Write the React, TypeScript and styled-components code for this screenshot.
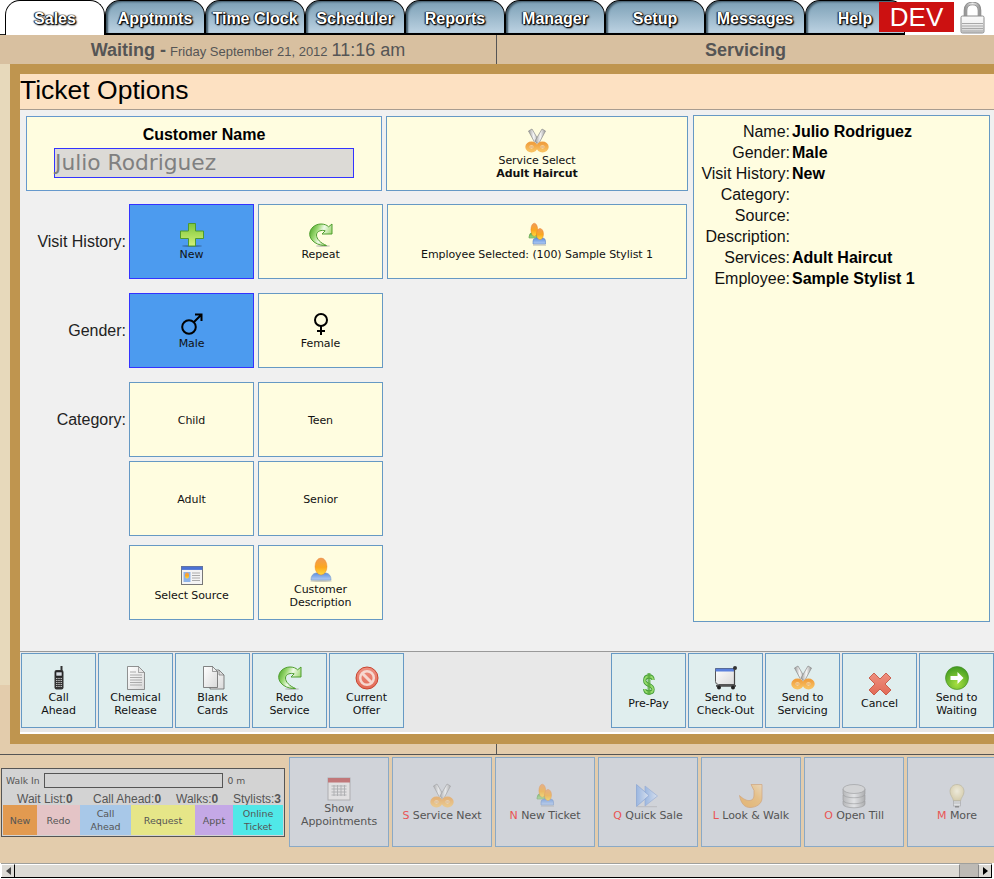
import React from "react";
import styled, { createGlobalStyle } from "styled-components";

const Global = createGlobalStyle`
  html, body { margin: 0; padding: 0; background: #fff; overflow: hidden; }
  * { box-sizing: border-box; }
`;

const SANS = `"Liberation Sans", Arial, sans-serif`;
const DEJA = `"DejaVu Sans", Verdana, sans-serif`;

const Page = styled.div`
  width: 994px;
  height: 879px;
  display: flex;
  flex-direction: column;
  overflow: hidden;
  font-family: ${DEJA};
  background: #fff;
`;

const TabBar = styled.div`
  height: 35px;
  flex: none;
  display: flex;
  align-items: flex-start;
  padding-left: 5px;
  background: linear-gradient(#fff 34px, #222 34px, #222 35px, #fff 35px);
  background-size: 5px 35px;
  background-repeat: no-repeat;
`;

const Tab = styled.div<{ $active?: boolean }>`
  width: 100px;
  height: 35px;
  flex: none;
  display: flex;
  justify-content: center;
  padding-top: 9px;
  border: solid #000;
  border-width: ${(p) => (p.$active ? "1px 1px 0 1px" : "1px 1px 2px 1px")};
  border-radius: 15px 15px 0 0;
  background: ${(p) => (p.$active ? "#fff" : "linear-gradient(#7b9fb5, #bcd2e2)")};
  box-shadow: ${(p) => (p.$active ? "none" : "inset 2px 1px 2px #3e5563")};
  font: bold 16px ${SANS};
  line-height: 18px;
  color: #fff;
  text-shadow: 0 0 1px #000, 0 0 1px #000, 1px 1px 2px #000, 1px 1px 1px #222, -1px 0 1px #333;
`;

const DevBadge = styled.div`
  width: 75px;
  height: 30px;
  margin: 2px 0 0 -26px;
  position: relative;
  flex: none;
  display: flex;
  align-items: center;
  justify-content: center;
  background: #cc1111;
  color: #fff;
  font: 26px ${SANS};
`;

const LockWrap = styled.div`
  width: 25px;
  height: 32px;
  margin: 2px 0 0 6px;
  flex: none;
`;

const StatusBar = styled.div`
  height: 29px;
  flex: none;
  display: grid;
  grid-template-columns: 497px 497px;
  background: #d8c0a0;
  color: #555;
  font-family: ${SANS};
`;

const StatusCell = styled.div<{ $divider?: boolean }>`
  display: flex;
  align-items: baseline;
  justify-content: center;
  gap: 4px;
  padding-top: 4px;
  font-size: 18px;
  line-height: 22px;
  border-right: ${(p) => (p.$divider ? "1px solid #555" : "none")};
`;

const StatusStrong = styled.b`
  font-size: 18px;
`;

const StatusSmall = styled.span`
  font-size: 13px;
`;

const MainRow = styled.div`
  height: 680px;
  flex: none;
  display: flex;
`;

const SideStrip = styled.div`
  width: 10px;
  flex: none;
  background: linear-gradient(#e7d9bb 0, #e7d9bb 621px, #e3ccac 621px);
`;

const Frame = styled.div`
  flex: 1;
  min-width: 0;
  display: flex;
  flex-direction: column;
  border: solid #bf954f;
  border-width: 10px 0 10px 10px;
  background: #fff;
`;

const TitleBar = styled.div`
  height: 36px;
  flex: none;
  background: #fde1c2;
  border-bottom: 1px solid #a89c90;
  font: 26.5px ${SANS};
  line-height: 33px;
  color: #000;
`;

const Body = styled.div`
  height: 541px;
  flex: none;
  display: flex;
  background: #f0f0f0;
`;

const LeftColumn = styled.div`
  width: 673px;
  flex: none;
  padding: 6px 0 0 6px;
  display: flex;
  flex-direction: column;
`;

const TopRow = styled.div`
  display: flex;
  gap: 4px;
`;

const NameBox = styled.div`
  width: 356px;
  height: 75px;
  border: 1px solid #6699cc;
  background: #fffde0;
  display: flex;
  flex-direction: column;
  align-items: center;
  padding-top: 9px;
`;

const NameLabel = styled.div`
  font: bold 16px ${SANS};
  line-height: 18px;
  color: #000;
  margin-bottom: 4px;
`;

const NameField = styled.div`
  width: 300px;
  height: 30px;
  border: 1px solid #3333ff;
  background: #dcdad6;
  color: #808080;
  font: 21.75px ${DEJA};
  line-height: 28px;
  white-space: nowrap;
`;

const Row = styled.div<{ $top: number }>`
  display: flex;
  margin-top: ${(p) => p.$top}px;
`;

const RowLabel = styled.div`
  width: 103px;
  height: 75px;
  flex: none;
  padding-right: 3px;
  display: flex;
  align-items: center;
  justify-content: flex-end;
  font: 16px ${SANS};
  color: #222;
`;

const ButtonGrid = styled.div`
  display: flex;
  gap: 4px;
`;

const ActionButton = styled.div<{
  $w?: number;
  $h?: number;
  $variant?: "plain" | "selected" | "tool" | "dock";
}>`
  width: ${(p) => p.$w ?? 125}px;
  height: ${(p) => p.$h ?? 75}px;
  flex: none;
  display: flex;
  flex-direction: column;
  align-items: center;
  justify-content: center;
  text-align: center;
  padding-top: 1px;
  font: 11px ${DEJA};
  line-height: 13px;
  letter-spacing: -0.08px;
  border: 1px solid
    ${(p) =>
      p.$variant === "selected" ? "#3333ff" : p.$variant === "dock" ? "#8aa9c6" : "#6699c4"};
  background: ${(p) =>
    p.$variant === "selected"
      ? "#4c9bef"
      : p.$variant === "tool"
        ? "#e0eeee"
        : p.$variant === "dock"
          ? "#d0d3d9"
          : "#fffde0"};
  color: ${(p) => (p.$variant === "dock" ? "#555" : "#111")};
`;

const IconSlot = styled.div<{ $faded?: boolean }>`
  width: 24px;
  height: 24px;
  flex: none;
  margin-bottom: 1px;
  opacity: ${(p) => (p.$faded ? 0.62 : 1)};
  svg { display: block; overflow: visible; }
`;

const Hotkey = styled.span`
  color: #e95555;
`;

const RightPanel = styled.div`
  width: 297px;
  height: 507px;
  margin-top: 5px;
  flex: none;
  border: 1px solid #6699c4;
  background: #fffde0;
  padding-top: 5px;
  display: grid;
  grid-template-columns: 96px 1fr;
  column-gap: 2px;
  grid-auto-rows: 21px;
  font: 16px ${SANS};
  line-height: 21px;
  color: #111;
`;

const DetailLabel = styled.div`
  text-align: right;
`;

const DetailValue = styled.div`
  font-weight: bold;
  color: #000;
`;

const Toolbar = styled.div`
  height: 81px;
  flex: none;
  padding: 1px 0 0 1px;
  border-top: 1px solid #999;
  background: #e8e8e8;
  display: flex;
  justify-content: space-between;
`;

const ToolGroup = styled.div`
  display: flex;
  gap: 2px;
`;

const WhiteLine = styled.div`
  height: 2px;
  flex: none;
  background: #fff;
`;

const Seam = styled.div`
  height: 11px;
  flex: none;
  background: #e3ccac;
  border-bottom: 1px solid #555;
  display: flex;
  justify-content: flex-start;
`;

const SeamLine = styled.div`
  width: 497px;
  border-right: 1px solid #555;
`;

const Dock = styled.div`
  height: 108px;
  flex: none;
  background: #e3ccac;
  display: flex;
  align-items: flex-start;
  padding: 2px 0 0 1px;
  gap: 3px;
  overflow: hidden;
`;

const Widget = styled.div`
  width: 284px;
  height: 69px;
  margin: 11px 1px 0 0;
  flex: none;
  border: 1px solid #555;
  background: #d3d3d3;
  display: flex;
  flex-direction: column;
  padding: 1px;
  color: #555;
`;

const WalkRow = styled.div`
  height: 21px;
  display: flex;
  align-items: center;
  padding-left: 3px;
  font: 9.2px ${DEJA};
  white-space: nowrap;
`;

const WalkBar = styled.div`
  width: 179px;
  height: 15px;
  margin: 0 4px 0 5px;
  border: 1px solid #555;
  background: #d3d3d3;
  flex: none;
`;

const StatsRow = styled.div`
  height: 14px;
  display: grid;
  grid-template-columns: 76px 83px 57px 1fr;
  padding: 0 0 0 14px;
  font: 12px ${SANS};
  line-height: 16px;
  white-space: nowrap;
`;

const LegendRow = styled.div`
  height: 30px;
  display: flex;
`;

const LegendCell = styled.div<{ $bg: string; $w: number }>`
  width: ${(p) => p.$w}px;
  flex: none;
  background: ${(p) => p.$bg};
  display: flex;
  align-items: center;
  justify-content: center;
  text-align: center;
  font: 9.5px ${DEJA};
  line-height: 13px;
  color: #555;
`;

const ScrollBar = styled.div`
  height: 15px;
  flex: none;
  margin: 0 2px 1px 1px;
  display: flex;
  background: #bdbab5;
  border-top: 1px solid #a0a09c;
  border-bottom: 1px solid #000;
`;

const ScrollButton = styled.div<{ $end?: boolean }>`
  width: 14px;
  flex: none;
  background: #dcdad5;
  border-top: 1px solid #fff;
  border-right: 1px solid #000;
  border-left: 1px solid ${(p) => (p.$end ? "#888" : "#fff")};
  display: flex;
  align-items: center;
  justify-content: center;
`;

const ScrollThumb = styled.div`
  width: 945px;
  flex: none;
  background: #dcdad5;
  border-top: 1px solid #fff;
  border-right: 1px solid #888;
`;

const ScrollTrack = styled.div`
  flex: 1;
`;

const TriangleLeft = styled.div`
  border: 4px solid transparent;
  border-right: 5px solid #444;
  border-left: 0;
`;

const TriangleRight = styled.div`
  border: 4px solid transparent;
  border-left: 5px solid #000;
  border-right: 0;
`;

/* ---------- icons ---------- */

const HiddenDefs = styled.svg`
  position: absolute;
  width: 0;
  height: 0;
`;

const Defs = () => (
  <HiddenDefs aria-hidden="true">
    <defs>
      <linearGradient id="gGreen" x1="0" y1="0" x2="0" y2="1">
        <stop offset="0" stopColor="#7cc63e" />
        <stop offset="0.5" stopColor="#a8dc58" />
        <stop offset="1" stopColor="#d2f07a" />
      </linearGradient>
      <linearGradient id="gGreenArc" x1="0" y1="0.2" x2="1" y2="0.6">
        <stop offset="0" stopColor="#4fa82a" />
        <stop offset="0.3" stopColor="#9ad872" />
        <stop offset="0.55" stopColor="#f0fae8" />
        <stop offset="1" stopColor="#8fd05c" />
      </linearGradient>
      <linearGradient id="gSteel" x1="0" y1="0" x2="1" y2="0">
        <stop offset="0" stopColor="#9a9a9a" />
        <stop offset="0.5" stopColor="#f6f6f6" />
        <stop offset="1" stopColor="#9a9a9a" />
      </linearGradient>
      <linearGradient id="gOrange" x1="0" y1="0" x2="0" y2="1">
        <stop offset="0" stopColor="#f0a040" />
        <stop offset="1" stopColor="#f8c060" />
      </linearGradient>
      <linearGradient id="gHead" x1="0" y1="0" x2="0" y2="1">
        <stop offset="0" stopColor="#f09a58" />
        <stop offset="0.55" stopColor="#fca81e" />
        <stop offset="1" stopColor="#ffdc40" />
      </linearGradient>
      <linearGradient id="gBlue" x1="0" y1="0" x2="0" y2="1">
        <stop offset="0" stopColor="#5b8fe0" />
        <stop offset="1" stopColor="#b4cdf4" />
      </linearGradient>
      <linearGradient id="gGreenBody" x1="0" y1="0" x2="0" y2="1">
        <stop offset="0" stopColor="#4aa838" />
        <stop offset="1" stopColor="#a6dc86" />
      </linearGradient>
      <linearGradient id="gPaper" x1="0" y1="0" x2="1" y2="1">
        <stop offset="0" stopColor="#ffffff" />
        <stop offset="1" stopColor="#d9d9d9" />
      </linearGradient>
      <linearGradient id="gRed" x1="0" y1="0" x2="0" y2="1">
        <stop offset="0" stopColor="#ee9080" />
        <stop offset="1" stopColor="#e26a56" />
      </linearGradient>
      <radialGradient id="gBall" cx="0.5" cy="0.75" r="0.75">
        <stop offset="0" stopColor="#a8e040" />
        <stop offset="1" stopColor="#3f9a20" />
      </radialGradient>
      <linearGradient id="gArrow" x1="0" y1="1" x2="1" y2="0">
        <stop offset="0" stopColor="#eda238" />
        <stop offset="0.6" stopColor="#f2b458" />
        <stop offset="1" stopColor="#f8d8a8" />
      </linearGradient>
      <linearGradient id="gCyl" x1="0" y1="0" x2="1" y2="0">
        <stop offset="0" stopColor="#a8a8a8" />
        <stop offset="0.5" stopColor="#ececec" />
        <stop offset="1" stopColor="#989898" />
      </linearGradient>
      <linearGradient id="gFF" x1="0" y1="0" x2="1" y2="0">
        <stop offset="0" stopColor="#7ba6e6" />
        <stop offset="1" stopColor="#dce8fa" />
      </linearGradient>
      <radialGradient id="gBulb" cx="0.5" cy="0.4" r="0.6">
        <stop offset="0" stopColor="#fff8dc" />
        <stop offset="1" stopColor="#d8c890" />
      </radialGradient>
      <linearGradient id="gLock" x1="0" y1="0" x2="0" y2="1">
        <stop offset="0" stopColor="#fafafa" />
        <stop offset="0.4" stopColor="#f2f2f2" />
        <stop offset="1" stopColor="#cfcfcf" />
      </linearGradient>
      <linearGradient id="gShackle" x1="0" y1="0" x2="1" y2="0">
        <stop offset="0" stopColor="#999" />
        <stop offset="0.5" stopColor="#eee" />
        <stop offset="1" stopColor="#999" />
      </linearGradient>
    </defs>
  </HiddenDefs>
);

const Svg = ({ children }: { children: React.ReactNode }) => (
  <svg width="24" height="24" viewBox="0 0 24 24">
    {children}
  </svg>
);

const PlusIcon = () => (
  <Svg>
    <ellipse cx="12" cy="23" rx="10" ry="1" fill="#2a4a70" opacity="0.5" />
    <path
      d="M8.500 0.500h7v7.500h8v7.500h-8v7.500h-7v-7.500h-8v-7.500h8z"
      fill="url(#gGreen)"
      stroke="#4d9a2e"
    />
  </Svg>
);

const RedoIcon = () => (
  <Svg>
    <ellipse cx="14" cy="23" rx="7" ry="1" fill="#999" opacity="0.5" />
    <path
      d="M23 1v10H13l3.200-3.200C13 6.600 7.500 8 7.500 12c0 4 4 8 10 10.500C9 23 1 18 0.700 11.500 0.500 5.500 6 1 12 1c3 0 6 1 7.600 2.800z"
      fill="url(#gGreenArc)"
      stroke="#4f9e2f"
    />
  </Svg>
);

const MaleIcon = () => (
  <Svg>
    <circle cx="9" cy="15" r="6.800" fill="none" stroke="#000" strokeWidth="2" />
    <path d="M14 10 L21 3 M15 2.500h6.500v6.500" fill="none" stroke="#000" strokeWidth="2" />
  </Svg>
);

const FemaleIcon = () => (
  <Svg>
    <circle cx="12" cy="8" r="6" fill="none" stroke="#000" strokeWidth="2" />
    <path d="M12 14v9 M8 19h8" fill="none" stroke="#000" strokeWidth="2" />
  </Svg>
);

const ScissorsIcon = () => (
  <Svg>
    <path d="M3.500 2 L7 0 L14 12 L10.500 15 Z" fill="url(#gSteel)" stroke="#8a8a8a" strokeWidth="0.7" />
    <path d="M20.500 2 L17 0 L10 12 L13.500 15 Z" fill="url(#gSteel)" stroke="#8a8a8a" strokeWidth="0.7" />
    <ellipse cx="6.500" cy="18" rx="4.200" ry="3.400" fill="#fff3d8" stroke="url(#gOrange)" strokeWidth="4" />
    <ellipse cx="17.500" cy="18" rx="4.200" ry="3.400" fill="#fff3d8" stroke="url(#gOrange)" strokeWidth="4" />
    <path d="M4.500 18h4M15.500 18h4" stroke="#d88a30" strokeWidth="1.200" />
  </Svg>
);

const PeopleIcon = () => (
  <Svg>
    <path d="M4 14q0-4 4-5h4v6H4z" fill="url(#gGreenBody)" stroke="#5a9c4a" strokeWidth="0.6" />
    <ellipse cx="9.300" cy="6.700" rx="3.400" ry="6.500" fill="url(#gHead)" stroke="#e87820" strokeWidth="0.4" />
    <path d="M8 21v-3q0-2.500 3-3h7q2.500 0.500 2.500 3v3z" fill="url(#gBlue)" stroke="#5f86c4" strokeWidth="0.6" />
    <ellipse cx="15" cy="11" rx="3.500" ry="5.600" fill="url(#gHead)" stroke="#e87820" strokeWidth="0.4" />
    <rect x="8" y="21.500" width="13" height="1.200" fill="#999" opacity="0.5" />
  </Svg>
);

const PersonIcon = () => (
  <Svg>
    <ellipse cx="12" cy="23" rx="11" ry="1" fill="#999" opacity="0.5" />
    <path d="M2 22q0-6 5-7h10q5 1 5 7z" fill="url(#gBlue)" stroke="#6b93cc" strokeWidth="0.6" />
    <ellipse cx="12" cy="8.500" rx="6" ry="8.500" fill="url(#gHead)" stroke="#e87820" strokeWidth="0.4" />
  </Svg>
);

const CardIcon = () => (
  <Svg>
    <rect x="1.500" y="2.500" width="21" height="18" fill="#f4f4f4" stroke="#777" />
    <rect x="1.500" y="2.500" width="21" height="3.400" fill="#4c72d4" />
    <rect x="3.500" y="8" width="7" height="10" fill="#8fb3e8" />
    <ellipse cx="7" cy="11.500" rx="2" ry="3" fill="url(#gHead)" />
    <path d="M12 9h8M12 11.500h8M12 14h8M12 16.500h8" stroke="#aaa" strokeWidth="1.100" />
  </Svg>
);

const PhoneIcon = () => (
  <Svg>
    <rect x="13.500" y="0" width="2" height="5" fill="#333" />
    <rect x="7.500" y="4" width="9" height="19.500" rx="2" fill="#333" />
    <rect x="9" y="6" width="6" height="4" fill="#d5dae0" stroke="#000" strokeWidth="0.5" />
    <path
      d="M9.200 12.500h5.600M9.200 14.500h5.600M9.200 16.500h5.600M9.200 18.500h5.600M9.200 20.500h5.600"
      stroke="#ddd"
      strokeWidth="1"
      strokeDasharray="1.200 1"
    />
  </Svg>
);

const DocIcon = () => (
  <Svg>
    <path d="M3.500 0.500h11l6 6v17h-17z" fill="url(#gPaper)" stroke="#777" strokeWidth="0.8" />
    <path d="M14.500 0.500v6h6z" fill="#e6e6e6" stroke="#777" strokeWidth="0.6" />
    <path d="M6 6h6M6 9h12M6 11.500h12M6 14h12M6 16.500h12M6 19h12" stroke="#aaa" strokeWidth="1" />
  </Svg>
);

const DocsIcon = () => (
  <Svg>
    <path d="M9 4h9l5 5v14H9z" fill="url(#gPaper)" stroke="#666" strokeWidth="0.8" />
    <path d="M18 4v5h5z" fill="#ddd" stroke="#666" strokeWidth="0.6" />
    <path d="M2.500 0.500h9l5 5v16h-14z" fill="url(#gPaper)" stroke="#666" strokeWidth="0.8" />
    <path d="M11.500 0.500v5h5z" fill="#eee" stroke="#666" strokeWidth="0.6" />
  </Svg>
);

const NoIcon = () => (
  <Svg>
    <circle cx="12" cy="12" r="11" fill="url(#gRed)" stroke="#c8452f" />
    <circle cx="12" cy="12" r="6.800" fill="none" stroke="#f6d8d0" strokeWidth="2.500" />
    <path d="M7 7 L17 17" stroke="#f6d8d0" strokeWidth="3" />
  </Svg>
);

const DollarIcon = () => (
  <Svg>
    <g transform="translate(3.500,0) scale(0.7,1)">
      <path
        d="M18 8C18 5 15 4.500 12 4.500S6 5.500 6 8.500c0 5.500 12 3.500 12 9 0 2.500-3 3-6 3s-6-1-6-3.500"
        fill="none"
        stroke="#3a9630"
        strokeWidth="4.400"
      />
      <path
        d="M18 8C18 5 15 4.500 12 4.500S6 5.500 6 8.500c0 5.500 12 3.500 12 9 0 2.500-3 3-6 3s-6-1-6-3.500"
        fill="none"
        stroke="#96da6c"
        strokeWidth="2.400"
      />
    </g>
    <path d="M10.500 1h3v22h-3z" fill="#58aa3c" opacity="0.8" />
  </Svg>
);

const CartIcon = () => (
  <Svg>
    <path d="M1.500 2.500h19v16h-16q-3 0-3-3z" fill="url(#gPaper)" stroke="#555" />
    <rect x="1.500" y="2.500" width="19" height="3" fill="#5a80dc" />
    <circle cx="21" cy="2" r="2" fill="#333" />
    <path d="M20.500 3v16" stroke="#444" strokeWidth="1.200" />
    <rect x="2" y="19" width="20" height="1.800" fill="#555" />
    <circle cx="5" cy="21.500" r="2" fill="#222" />
    <circle cx="19" cy="21.500" r="2" fill="#222" />
  </Svg>
);

const CancelIcon = () => (
  <Svg>
    <path
      d="M6 1 L12 7 L18 1 L23 6 L17 12 L23 18 L18 23 L12 17 L6 23 L1 18 L7 12 L1 6 Z"
      fill="url(#gRed)"
      stroke="#c14a36"
      strokeWidth="0.8"
    />
  </Svg>
);

const ForwardBallIcon = () => (
  <Svg>
    <circle cx="12" cy="12" r="11.500" fill="url(#gBall)" stroke="#3f8a22" strokeWidth="0.6" />
    <path d="M5.500 10h7V6l6 6-6 6v-4h-7z" fill="#fff" />
  </Svg>
);

const CalendarIcon = () => (
  <Svg>
    <rect x="1" y="1" width="22" height="22" fill="#ece8e6" stroke="#999" />
    <rect x="1" y="1" width="22" height="4.500" fill="#b84040" />
    <path
      d="M4.500 9h15M4.500 12h15M4.500 15h15M4.500 18h15M7 8v11M10.500 8v11M14 8v11M17.500 8v11"
      stroke="#999"
      strokeWidth="0.9"
    />
  </Svg>
);

const FastForwardIcon = () => (
  <Svg>
    <rect x="1" y="22" width="20" height="1.200" fill="#999" opacity="0.5" />
    <path d="M9 2 L21.500 12 L9 22z" fill="url(#gFF)" stroke="#7a9ad4" strokeWidth="0.7" />
    <path d="M0.500 0.500 L13 11.500 L0.500 22.500z" fill="url(#gFF)" stroke="#5f88d0" strokeWidth="0.7" />
  </Svg>
);

const LookWalkIcon = () => (
  <Svg>
    <path
      d="M12 0.500H23V14C23 20 17 23.500 11 23.500 6 23.500 2 20 0.500 11.500 4 15 8 17 11 16.500 14 16 15 14 15 11V6.500z"
      fill="url(#gArrow)"
      stroke="#d08a48"
      strokeWidth="0.7"
    />
  </Svg>
);

const DatabaseIcon = () => (
  <Svg>
    <path d="M1 17v3c0 5 22 5 22 0v-3z" fill="url(#gCyl)" stroke="#777" strokeWidth="0.6" />
    <path d="M1 11v5c0 5 22 5 22 0v-5z" fill="url(#gCyl)" stroke="#777" strokeWidth="0.6" />
    <path d="M1 5v5c0 5 22 5 22 0V5z" fill="url(#gCyl)" stroke="#777" strokeWidth="0.6" />
    <ellipse cx="12" cy="5" rx="11" ry="4.500" fill="#d4d4d4" stroke="#777" strokeWidth="0.6" />
  </Svg>
);

const BulbIcon = () => (
  <Svg>
    <path
      d="M12 0.500C7.500 0.500 5 4 5 7.500c0 4 3 6 3.500 9.500h7C16 13.500 19 11.500 19 7.500 19 4 16.500 0.500 12 0.500z"
      fill="url(#gBulb)"
      stroke="#b0a680"
      strokeWidth="0.7"
    />
    <rect x="8.500" y="17" width="7" height="5" fill="#e8e8e8" stroke="#888" strokeWidth="0.6" />
    <path d="M8.500 19h7" stroke="#888" strokeWidth="0.6" />
    <rect x="10" y="22" width="4" height="1.500" fill="#666" />
  </Svg>
);

const LockIcon = () => (
  <svg width="25" height="32" viewBox="0 0 25 32">
    <path
      d="M5.500 15V8.500C5.500 4 8 1.500 12.500 1.500S19.500 4 19.500 8.500V15"
      fill="none"
      stroke="#8c8c8c"
      strokeWidth="3.600"
    />
    <path
      d="M5.500 15V8.500C5.500 4 8 1.500 12.500 1.500S19.500 4 19.500 8.500V15"
      fill="none"
      stroke="url(#gShackle)"
      strokeWidth="2.200"
    />
    <rect x="1" y="14" width="23" height="17" rx="1.500" fill="url(#gLock)" stroke="#8c8c8c" />
    <path d="M2 21.500h21M2 24h21M2 26.500h21M2 29h21" stroke="#a8a8a8" strokeWidth="1.200" />
  </svg>
);

/* ---------- composition ---------- */

type BtnProps = {
  icon?: React.ReactNode;
  lines: React.ReactNode[];
  w?: number;
  h?: number;
  variant?: "plain" | "selected" | "tool" | "dock";
};

const Btn = ({ icon, lines, w, h, variant }: BtnProps) => (
  <ActionButton $w={w} $h={h} $variant={variant}>
    {icon && <IconSlot $faded={variant === "dock"}>{icon}</IconSlot>}
    {lines.map((l, i) => (
      <div key={i}>{l}</div>
    ))}
  </ActionButton>
);

const tabs = ["Sales", "Apptmnts", "Time Clock", "Scheduler", "Reports", "Manager", "Setup", "Messages", "Help"];

const details: [string, string][] = [
  ["Name:", "Julio Rodriguez"],
  ["Gender:", "Male"],
  ["Visit History:", "New"],
  ["Category:", ""],
  ["Source:", ""],
  ["Description:", ""],
  ["Services:", "Adult Haircut"],
  ["Employee:", "Sample Stylist 1"],
];

const legend: { bg: string; w: number; lines: string[] }[] = [
  { bg: "#e29a50", w: 34, lines: ["New"] },
  { bg: "#e4c4c6", w: 43, lines: ["Redo"] },
  { bg: "#a8c8e8", w: 51, lines: ["Call", "Ahead"] },
  { bg: "#e6e688", w: 64, lines: ["Request"] },
  { bg: "#c4a8e6", w: 38, lines: ["Appt"] },
  { bg: "#50e8e8", w: 50, lines: ["Online", "Ticket"] },
];

export default function App() {
  return (
    <Page>
      <Global />
      <Defs />
      <TabBar>
        {tabs.map((t, i) => (
          <Tab key={t} $active={i === 0}>
            {t}
          </Tab>
        ))}
        <DevBadge>DEV</DevBadge>
        <LockWrap>
          <LockIcon />
        </LockWrap>
      </TabBar>

      <StatusBar>
        <StatusCell $divider>
          <StatusStrong>Waiting -</StatusStrong>
          <StatusSmall>Friday September 21, 2012</StatusSmall>
          <span>11:16 am</span>
        </StatusCell>
        <StatusCell>
          <StatusStrong>Servicing</StatusStrong>
        </StatusCell>
      </StatusBar>

      <MainRow>
        <SideStrip />
        <Frame>
          <TitleBar>Ticket Options</TitleBar>
          <Body>
            <LeftColumn>
              <TopRow>
                <NameBox>
                  <NameLabel>Customer Name</NameLabel>
                  <NameField>Julio Rodriguez</NameField>
                </NameBox>
                <Btn
                  w={302}
                  icon={<ScissorsIcon />}
                  lines={["Service Select", <b key="b">Adult Haircut</b>]}
                />
              </TopRow>
              <Row $top={13}>
                <RowLabel>Visit History:</RowLabel>
                <ButtonGrid>
                  <Btn variant="selected" icon={<PlusIcon />} lines={["New"]} />
                  <Btn icon={<RedoIcon />} lines={["Repeat"]} />
                  <Btn w={300} icon={<PeopleIcon />} lines={["Employee Selected: (100) Sample Stylist 1"]} />
                </ButtonGrid>
              </Row>
              <Row $top={14}>
                <RowLabel>Gender:</RowLabel>
                <ButtonGrid>
                  <Btn variant="selected" icon={<MaleIcon />} lines={["Male"]} />
                  <Btn icon={<FemaleIcon />} lines={["Female"]} />
                </ButtonGrid>
              </Row>
              <Row $top={14}>
                <RowLabel>Category:</RowLabel>
                <ButtonGrid>
                  <Btn lines={["Child"]} />
                  <Btn lines={["Teen"]} />
                </ButtonGrid>
              </Row>
              <Row $top={4}>
                <RowLabel />
                <ButtonGrid>
                  <Btn lines={["Adult"]} />
                  <Btn lines={["Senior"]} />
                </ButtonGrid>
              </Row>
              <Row $top={9}>
                <RowLabel />
                <ButtonGrid>
                  <Btn icon={<CardIcon />} lines={["Select Source"]} />
                  <Btn icon={<PersonIcon />} lines={["Customer", "Description"]} />
                </ButtonGrid>
              </Row>
            </LeftColumn>
            <RightPanel>
              {details.map(([k, v]) => (
                <React.Fragment key={k}>
                  <DetailLabel>{k}</DetailLabel>
                  <DetailValue>{v}</DetailValue>
                </React.Fragment>
              ))}
            </RightPanel>
          </Body>
          <Toolbar>
            <ToolGroup>
              <Btn variant="tool" w={75} icon={<PhoneIcon />} lines={["Call", "Ahead"]} />
              <Btn variant="tool" w={75} icon={<DocIcon />} lines={["Chemical", "Release"]} />
              <Btn variant="tool" w={75} icon={<DocsIcon />} lines={["Blank", "Cards"]} />
              <Btn variant="tool" w={75} icon={<RedoIcon />} lines={["Redo", "Service"]} />
              <Btn variant="tool" w={75} icon={<NoIcon />} lines={["Current", "Offer"]} />
            </ToolGroup>
            <ToolGroup>
              <Btn variant="tool" w={75} icon={<DollarIcon />} lines={["Pre-Pay"]} />
              <Btn variant="tool" w={75} icon={<CartIcon />} lines={["Send to", "Check-Out"]} />
              <Btn variant="tool" w={75} icon={<ScissorsIcon />} lines={["Send to", "Servicing"]} />
              <Btn variant="tool" w={75} icon={<CancelIcon />} lines={["Cancel"]} />
              <Btn variant="tool" w={75} icon={<ForwardBallIcon />} lines={["Send to", "Waiting"]} />
            </ToolGroup>
          </Toolbar>
          <WhiteLine />
        </Frame>
      </MainRow>

      <Seam>
        <SeamLine />
      </Seam>

      <Dock>
        <Widget>
          <WalkRow>
            Walk In
            <WalkBar />0 m
          </WalkRow>
          <StatsRow>
            <span>
              Wait List:<b>0</b>
            </span>
            <span>
              Call Ahead:<b>0</b>
            </span>
            <span>
              Walks:<b>0</b>
            </span>
            <span>
              Stylists:<b>3</b>
            </span>
          </StatsRow>
          <LegendRow>
            {legend.map((c) => (
              <LegendCell key={c.lines[0]} $bg={c.bg} $w={c.w}>
                <div>
                  {c.lines.map((l) => (
                    <div key={l}>{l}</div>
                  ))}
                </div>
              </LegendCell>
            ))}
          </LegendRow>
        </Widget>
        <Btn variant="dock" w={100} h={90} icon={<CalendarIcon />} lines={["Show", "Appointments"]} />
        <Btn variant="dock" w={100} h={90} icon={<ScissorsIcon />} lines={[<><Hotkey>S</Hotkey> Service Next</>]} />
        <Btn variant="dock" w={100} h={90} icon={<PeopleIcon />} lines={[<><Hotkey>N</Hotkey> New Ticket</>]} />
        <Btn variant="dock" w={100} h={90} icon={<FastForwardIcon />} lines={[<><Hotkey>Q</Hotkey> Quick Sale</>]} />
        <Btn variant="dock" w={100} h={90} icon={<LookWalkIcon />} lines={[<><Hotkey>L</Hotkey> Look &amp; Walk</>]} />
        <Btn variant="dock" w={100} h={90} icon={<DatabaseIcon />} lines={[<><Hotkey>O</Hotkey> Open Till</>]} />
        <Btn variant="dock" w={100} h={90} icon={<BulbIcon />} lines={[<><Hotkey>M</Hotkey> More</>]} />
      </Dock>

      <ScrollBar>
        <ScrollButton>
          <TriangleLeft />
        </ScrollButton>
        <ScrollThumb />
        <ScrollTrack />
        <ScrollButton $end>
          <TriangleRight />
        </ScrollButton>
      </ScrollBar>
    </Page>
  );
}
